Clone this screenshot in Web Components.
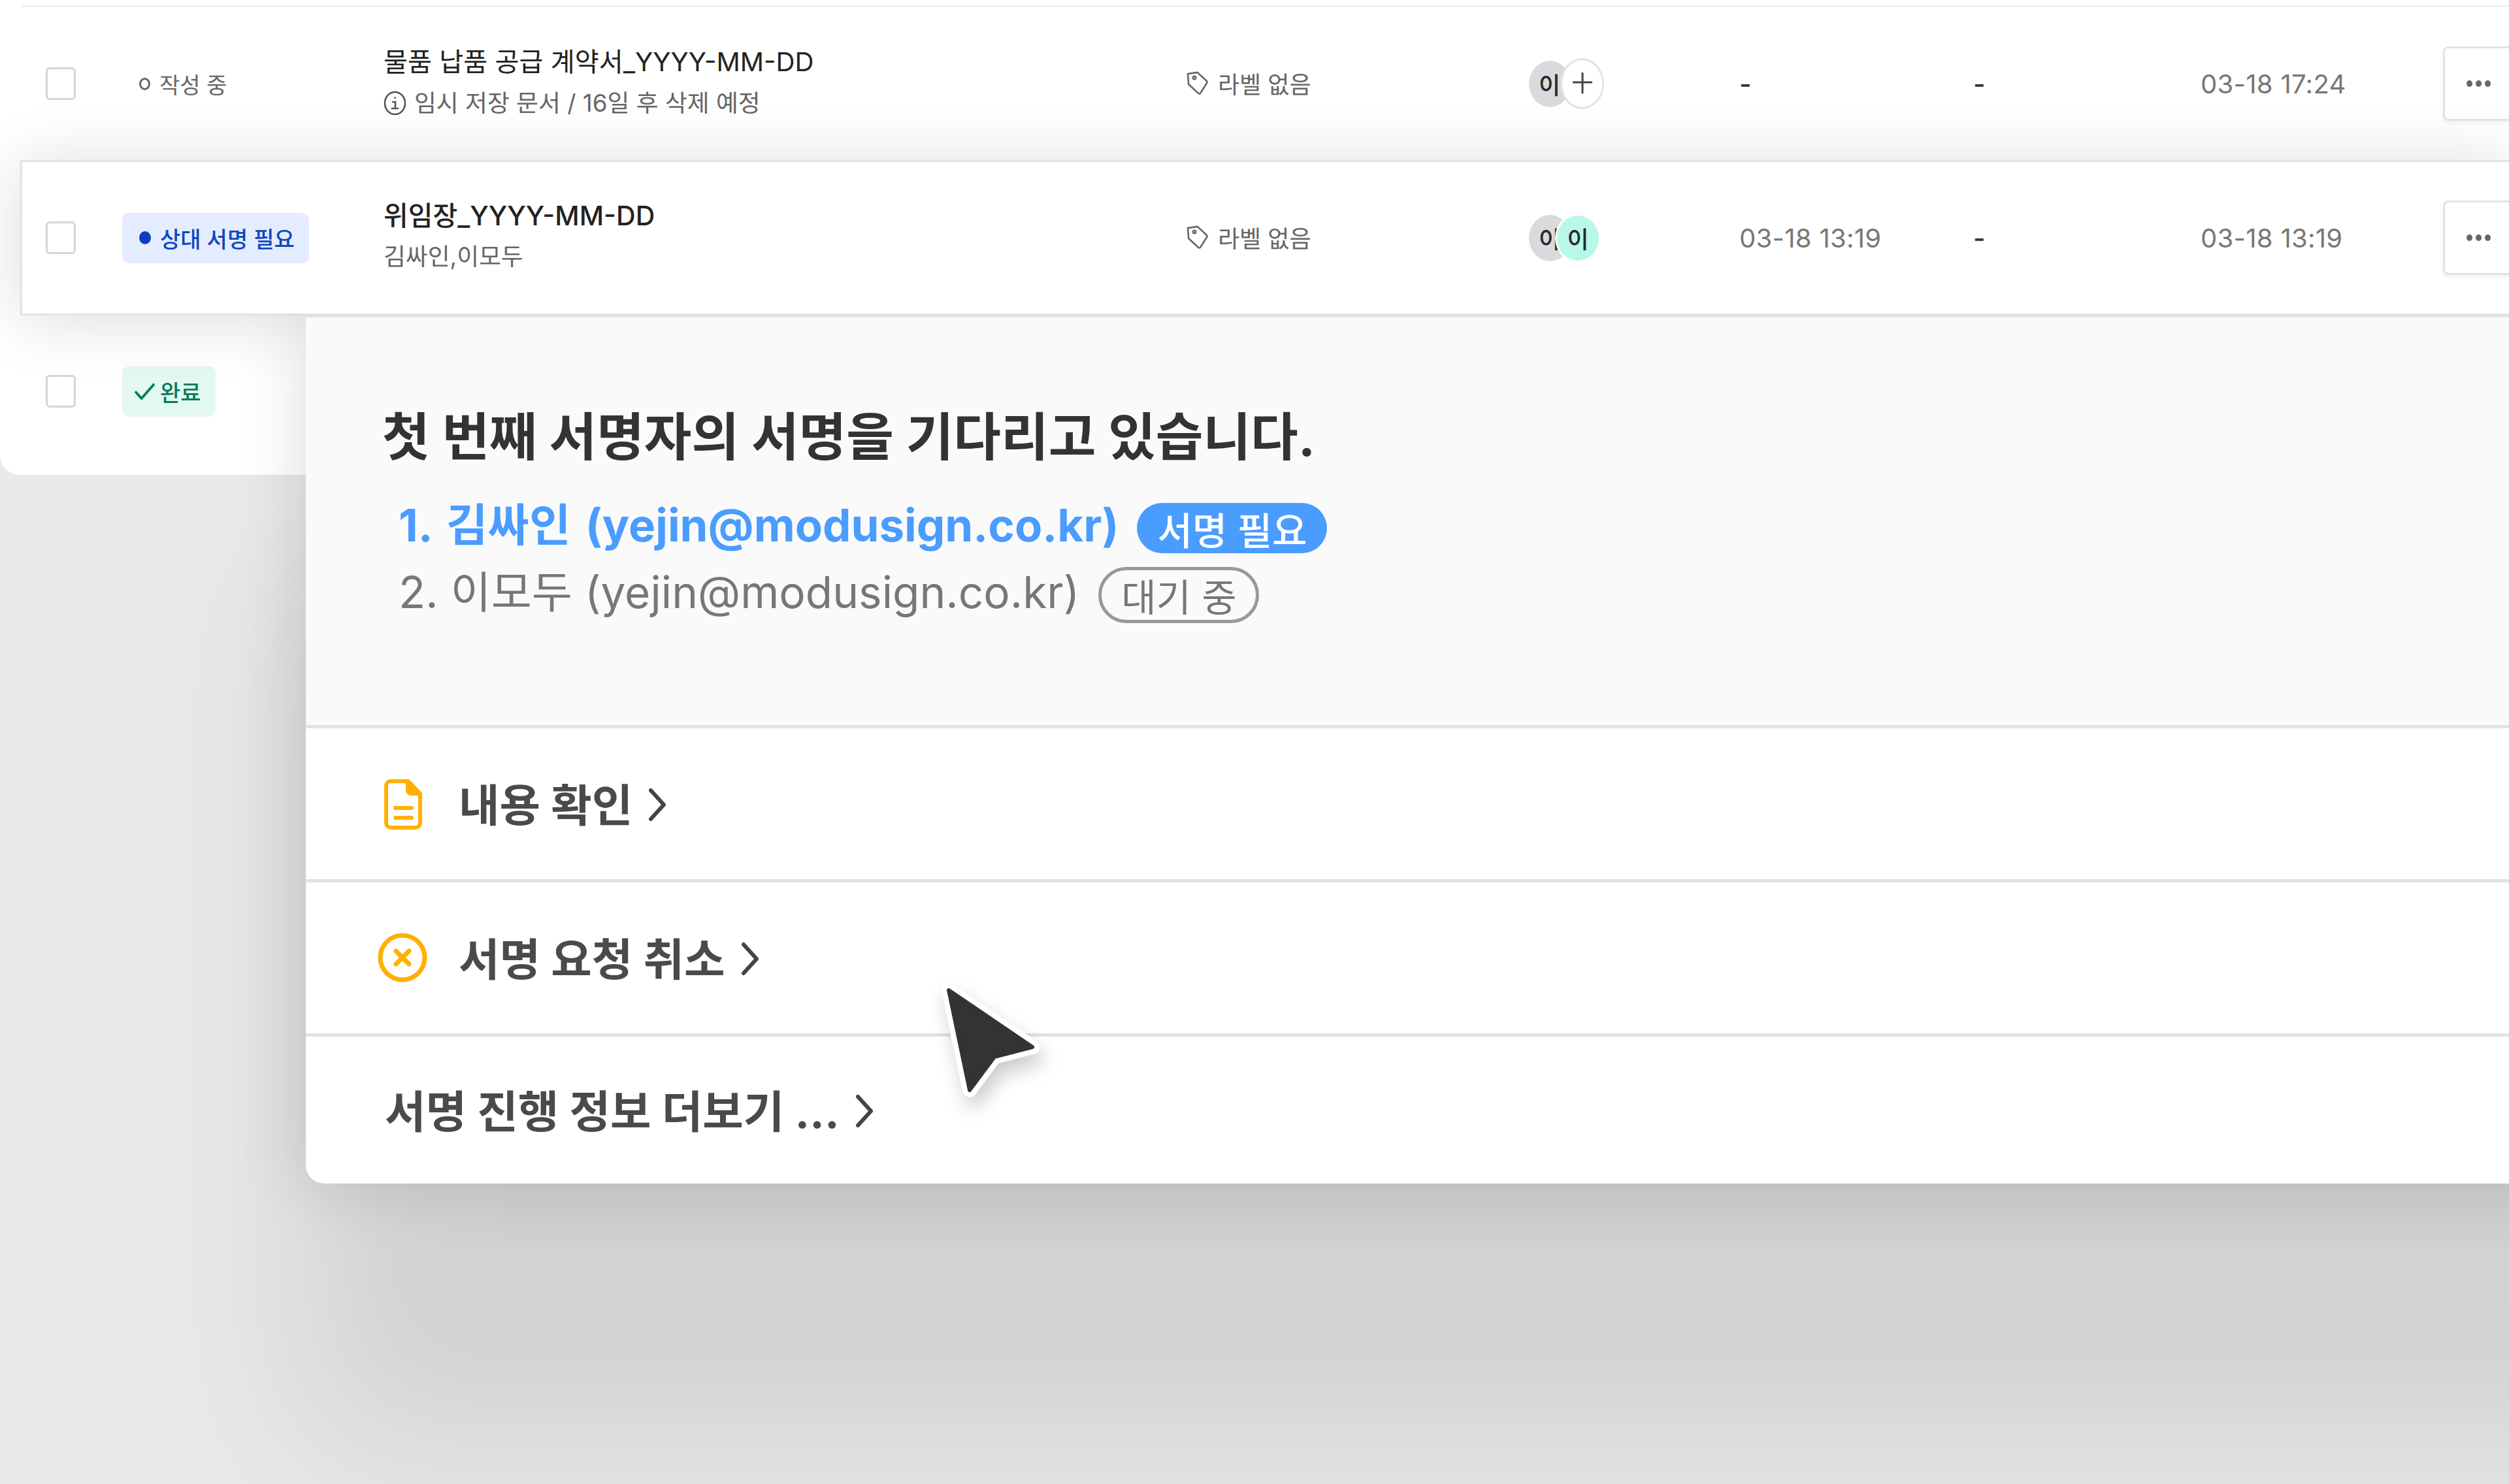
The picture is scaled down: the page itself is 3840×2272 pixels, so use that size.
<!DOCTYPE html>
<html lang="ko">
<head>
<meta charset="utf-8">
<title>문서 목록</title>
<style>
  html, body { margin: 0; padding: 0; }
  body {
    width: 3840px;
    height: 2272px;
    overflow: hidden;
    background: #e9e9e9;
    font-family: "Inter", "Noto Sans CJK KR", sans-serif;
  }
</style>
</head>
<body>
<doc-stage>
  <doc-table>
    <doc-row>
      <status-chip kind="draft" slot="status">작성 중</status-chip>
      <span slot="title">물품 납품 공급 계약서_YYYY-MM-DD</span>
      <temp-note slot="sub">임시 저장 문서 / 16일 후 삭제 예정</temp-note>
      <user-avatars slot="people" first="이" add></user-avatars>
      <span slot="sent" class="none">-</span>
      <span slot="done" class="none">-</span>
      <span slot="updated">03-18 17:24</span>
    </doc-row>
    <doc-row selected>
      <status-chip kind="waiting" slot="status">상대 서명 필요</status-chip>
      <span slot="title">위임장_YYYY-MM-DD</span>
      <span slot="sub">김싸인,이모두</span>
      <user-avatars slot="people" first="이" second="이"></user-avatars>
      <span slot="sent">03-18 13:19</span>
      <span slot="done" class="none">-</span>
      <span slot="updated">03-18 13:19</span>
    </doc-row>
    <doc-row last>
      <status-chip kind="done" slot="status">완료</status-chip>
    </doc-row>
  </doc-table>

  <sign-panel>
    <span slot="heading">첫 번째 서명자의 서명을 기다리고 있습니다.</span>
    <signer-line slot="signers" state="active" badge="서명 필요">1. 김싸인 (yejin@modusign.co.kr)</signer-line>
    <signer-line slot="signers" state="pending" badge="대기 중">2. 이모두 (yejin@modusign.co.kr)</signer-line>
    <panel-link slot="links" icon="doc">내용 확인</panel-link>
    <panel-link slot="links" icon="cancel">서명 요청 취소</panel-link>
    <panel-link slot="links" last>서명 진행 정보 더보기 ...</panel-link>
  </sign-panel>

  <mouse-pointer></mouse-pointer>
</doc-stage>

<script>
class DocStage extends HTMLElement {
  constructor() {
    super();
    this.attachShadow({ mode: "open" });
    this.shadowRoot.innerHTML = `
      <style>
        :host { display: block; position: relative; width: 3840px; height: 2272px; overflow: hidden; }
      </style>
      <slot></slot>
    `;
  }
}

class DocTable extends HTMLElement {
  constructor() {
    super();
    this.attachShadow({ mode: "open" });
    this.shadowRoot.innerHTML = `
      <style>
        :host {
          display: block;
          box-sizing: border-box;
          height: 727px;
          padding-top: 8px;
          background: #fff;
          border-bottom-left-radius: 30px;
          overflow: hidden;
        }
        .top { height: 3px; margin-left: 33px; background: #efefef; }
      </style>
      <div class="top"></div>
      <slot></slot>
    `;
  }
}

class DocRow extends HTMLElement {
  constructor() {
    super();
    this.attachShadow({ mode: "open" });
    this.shadowRoot.innerHTML = `
      <style>
        :host {
          display: grid;
          box-sizing: border-box;
          height: 234px;
          padding-left: 70px;
          grid-template-columns: 117px 400px 1229px 524px 322px 358px 348px 371px 101px;
          align-items: center;
          position: relative;
          font-size: 34px;
          color: #666;
        }
        :host([selected]) {
          height: 238px;
          margin-left: 31px;
          padding-left: 36px;
          background: #fff;
          border: solid #e3e3e3;
          border-width: 3px 0 3px 3px;
          box-shadow: 0 6px 100px rgba(0, 0, 0, 0.14);
          z-index: 1;
        }
        :host([last]) { height: 238px; padding-bottom: 6px; }
        .box {
          width: 46px;
          height: 50px;
          box-sizing: border-box;
          border: 3px solid #d6d6d6;
          border-radius: 6px;
          background: #fff;
        }
        .doc { display: flex; flex-direction: column; gap: 18px; min-width: 0; margin-top: -4px; }
        .title { font-size: 40.2px; line-height: 46px; color: #222; }
        :host([selected]) .title { font-size: 41px; font-weight: 500; margin-top: -2px; }
        .sub { font-size: 36.8px; line-height: 44px; color: #666; }
        .label { display: flex; align-items: center; gap: 14px; font-size: 36px; margin-top: -2px; }
        .label svg { width: 34px; height: 38px; }
        .dash { color: #777; font-size: 40px; letter-spacing: 0.3px; }
        ::slotted(.none) { color: #333; font-weight: 500; }
        .more {
          justify-self: end;
          width: 101px;
          height: 114px;
          box-sizing: border-box;
          border: 3px solid #e3e3e3;
          border-right: 0;
          border-radius: 8px 0 0 8px;
          background: #fff;
          box-shadow: 0 3px 6px rgba(0, 0, 0, 0.06);
          display: flex;
          align-items: center;
          gap: 5px;
          padding-left: 33px;
        }
        .more i { width: 9px; height: 10px; border-radius: 50%; background: #666; }
      </style>
      <div class="box"></div>
      <slot name="status"></slot>
      <div class="doc">
        <div class="title"><slot name="title"></slot></div>
        <div class="sub"><slot name="sub"></slot></div>
      </div>
      <div class="label" id="label">
        <svg viewBox="0 0 34 38" fill="none" stroke="#666" stroke-width="2.6" stroke-linejoin="round">
          <path d="M4 3h15l12 15a2 2 0 0 1 0 3L19 35a2 2 0 0 1-3 0L3 19z" transform="rotate(-8 17 19)"/>
          <circle cx="12" cy="11" r="2.2"/>
        </svg>
        <span>라벨 없음</span>
      </div>
      <slot name="people"></slot>
      <div class="dash"><slot name="sent"></slot></div>
      <div class="dash"><slot name="done"></slot></div>
      <div class="dash"><slot name="updated"></slot></div>
      <div class="more" id="more"><i></i><i></i><i></i></div>
    `;
  }

  connectedCallback() {
    // The half-hidden row has nothing but its checkbox and status
    if (this.hasAttribute("last")) {
      this.shadowRoot.querySelector(".doc").style.visibility = "hidden";
      this.shadowRoot.getElementById("label").style.visibility = "hidden";
      this.shadowRoot.getElementById("more").style.visibility = "hidden";
    }
  }
}

class StatusChip extends HTMLElement {
  constructor() {
    super();
    this.attachShadow({ mode: "open" });
  }

  connectedCallback() {
    const kind = this.getAttribute("kind");
    const marks = {
      draft: `<i class="ring"></i>`,
      waiting: `<i class="dot"></i>`,
      done: `<svg viewBox="0 0 34 28" fill="none" stroke="#087a5c" stroke-width="4" stroke-linecap="round" stroke-linejoin="round"><path d="M3 15l9 10L31 3"/></svg>`
    };
    this.shadowRoot.innerHTML = `
      <style>
        :host {
          display: inline-flex;
          justify-self: start;
          align-items: center;
          box-sizing: border-box;
          height: 77px;
          padding: 0 22px 0 26px;
          gap: 14px;
          border-radius: 10px;
          font-size: 34px;
          white-space: nowrap;
        }
        :host([kind="draft"]) { color: #666; }
        :host([kind="waiting"]) { background: #e4edff; color: #0d47c2; font-weight: 500; }
        :host([kind="done"]) { background: #e3f8f1; color: #087a5c; font-weight: 500; padding: 0 22px 0 18px; gap: 7px; }
        .ring { width: 17px; height: 19px; box-sizing: border-box; border: 3px solid #666; border-radius: 50%; }
        .dot { width: 18px; height: 20px; border-radius: 50%; background: #0b3fc0; }
        svg { width: 33px; height: 27px; }
      </style>
      ${marks[kind]}
      <slot></slot>
    `;
  }
}

class TempNote extends HTMLElement {
  constructor() {
    super();
    this.attachShadow({ mode: "open" });
    this.shadowRoot.innerHTML = `
      <style>
        :host { display: flex; align-items: center; gap: 12px; }
        svg { width: 35px; height: 38px; flex: none; }
      </style>
      <svg viewBox="0 0 35 38" fill="none" stroke="#555" stroke-width="2.6">
        <ellipse cx="17.5" cy="19" rx="15.5" ry="17"/>
        <path d="M14 17h4v10M13 27h9" stroke-linecap="round"/>
        <circle cx="17.5" cy="11" r="1.4" fill="#555" stroke="none"/>
      </svg>
      <slot></slot>
    `;
  }
}

class UserAvatars extends HTMLElement {
  constructor() {
    super();
    this.attachShadow({ mode: "open" });
  }

  connectedCallback() {
    const second = this.hasAttribute("add")
      ? `<div class="face add"><svg viewBox="0 0 30 34" fill="none" stroke="#444" stroke-width="3" stroke-linecap="round"><path d="M1 15h28M15 1v30"/></svg></div>`
      : `<div class="face mint">${this.getAttribute("second")}</div>`;
    this.shadowRoot.innerHTML = `
      <style>
        :host { display: flex; align-items: center; font-size: 36px; font-weight: 500; color: #2a2a2a; }
        .face {
          display: flex;
          align-items: center;
          justify-content: center;
          box-sizing: border-box;
          width: 64px;
          height: 71px;
          border-radius: 50%;
          flex: none;
        }
        .grey { background: #d9dade; justify-content: flex-start; padding-left: 15px; }
        .mint {
          width: 70px;
          height: 75px;
          margin-left: -24px;
          background: #b8f8e8;
          border: 3px solid #fff;
          position: relative;
        }
        .add {
          width: 67px;
          height: 78px;
          margin-left: -16px;
          background: #fff;
          border: 3px solid #e3e3e3;
          position: relative;
        }
        .add svg { width: 30px; height: 34px; }
      </style>
      <div class="face grey">${this.getAttribute("first")}</div>
      ${second}
    `;
  }
}

class SignPanel extends HTMLElement {
  constructor() {
    super();
    this.attachShadow({ mode: "open" });
    this.shadowRoot.innerHTML = `
      <style>
        :host {
          display: flex;
          flex-direction: column;
          position: absolute;
          left: 468px;
          right: -900px;
          top: 481px;
          box-sizing: border-box;
          height: 1331px;
          background: #fff;
          border-top: 5px solid #e2e2e2;
          border-bottom-left-radius: 28px;
          box-shadow: 0 400px 460px rgba(0, 0, 0, 0.1), 0 0 110px rgba(0, 0, 0, 0.14);
          clip-path: inset(0 -1000px -1000px -1000px);
          z-index: 2;
        }
        .top {
          box-sizing: border-box;
          height: 631px;
          padding: 128px 0 0 117px;
          background: #fafafa;
          border-bottom: 5px solid #e2e2e2;
        }
        .heading {
          font-size: 79px;
          line-height: 110px;
          font-weight: 700;
          color: #333;
          white-space: nowrap;
        }
        .signers { display: flex; flex-direction: column; margin: 23px 0 0 25px; }
      </style>
      <div class="top">
        <div class="heading"><slot name="heading"></slot></div>
        <div class="signers"><slot name="signers"></slot></div>
      </div>
      <slot name="links"></slot>
    `;
  }
}

class SignerLine extends HTMLElement {
  constructor() {
    super();
    this.attachShadow({ mode: "open" });
    this.shadowRoot.innerHTML = `
      <style>
        :host {
          display: flex;
          align-items: center;
          height: 103px;
          gap: 32px;
          white-space: nowrap;
        }
        :host([state="active"]) { color: #4a9cff; font-weight: 700; font-size: 69px; word-spacing: 6px; }
        :host([state="pending"]) { color: #777; font-size: 67.5px; }
        .badge {
          box-sizing: border-box;
          display: flex;
          align-items: center;
          justify-content: center;
          border-radius: 44px;
          font-size: 58px;
          word-spacing: 0;
        }
        :host([state="active"]) .badge { width: 291px; height: 77px; background: #4a9cff; color: #fff; font-weight: 500; margin-top: 20px; margin-left: -4px; }
        :host([state="pending"]) .badge { width: 246px; height: 86px; border: 5px solid #999; color: #777; margin-top: 18px; margin-left: -3px; }
      </style>
      <slot></slot>
      <div class="badge"></div>
    `;
  }

  connectedCallback() {
    this.shadowRoot.querySelector(".badge").textContent = this.getAttribute("badge");
  }
}

class PanelLink extends HTMLElement {
  constructor() {
    super();
    this.attachShadow({ mode: "open" });
  }

  connectedCallback() {
    const icons = {
      doc: `<svg class="doc" viewBox="0 0 58 77" fill="none" stroke="#ffb000" stroke-width="6" stroke-linejoin="round">
              <path d="M9 3h28l18 19v45a7 7 0 0 1-7 7H10a7 7 0 0 1-7-7V10a7 7 0 0 1 6-7z"/>
              <path d="M36 3v14a5 5 0 0 0 5 5h14z" fill="#ffb000"/>
              <path d="M17 44h25M17 59h25" stroke-linecap="round"/>
            </svg>`,
      cancel: `<svg class="cancel" viewBox="0 0 76 76" fill="none" stroke="#ffb000" stroke-width="7" stroke-linecap="round">
              <circle cx="38" cy="38" r="34"/>
              <path d="M28 28l20 20M48 28L28 48"/>
            </svg>`
    };
    const icon = this.getAttribute("icon");
    this.shadowRoot.innerHTML = `
      <style>
        :host {
          display: flex;
          align-items: center;
          box-sizing: border-box;
          height: 237px;
          padding-left: 110px;
          border-bottom: 5px solid #e2e2e2;
          font-size: 68px;
          font-weight: 700;
          color: #4a4a4a;
          white-space: nowrap;
        }
        :host([last]) { border-bottom: 0; padding-left: 121px; height: 226px; }
        .icon { width: 124px; flex: none; display: flex; align-items: center; }
        .doc { width: 58px; height: 77px; margin-left: 10px; margin-top: 3px; }
        .cancel { width: 76px; height: 76px; margin-top: 3px; margin-top: 0; }
        .chev { width: 28px; height: 52px; margin-left: 24px; margin-top: 3px; }
        slot { display: block; margin-top: -3px; }
      </style>
      ${icon ? `<div class="icon">${icons[icon]}</div>` : ""}
      <slot></slot>
      <svg class="chev" viewBox="0 0 28 52" fill="none" stroke="#444" stroke-width="6" stroke-linecap="round" stroke-linejoin="round">
        <path d="M4 4l20 22L4 48"/>
      </svg>
    `;
  }
}

class MousePointer extends HTMLElement {
  constructor() {
    super();
    this.attachShadow({ mode: "open" });
    this.shadowRoot.innerHTML = `
      <style>
        :host {
          position: absolute;
          left: 1420px;
          top: 1490px;
          width: 200px;
          height: 210px;
          z-index: 3;
          filter: drop-shadow(6px 16px 14px rgba(0, 0, 0, 0.2));
        }
        svg { width: 100%; height: 100%; overflow: visible; }
      </style>
      <svg viewBox="0 0 200 210" stroke-linejoin="round">
        <path d="M32 26L160 113L102 128L64 179z" fill="#fff" stroke="#fff" stroke-width="22"/>
        <path d="M32 26L160 113L102 128L64 179z" fill="#333" stroke="#333" stroke-width="6"/>
      </svg>
    `;
  }
}

customElements.define("doc-stage", DocStage);
customElements.define("doc-table", DocTable);
customElements.define("doc-row", DocRow);
customElements.define("status-chip", StatusChip);
customElements.define("temp-note", TempNote);
customElements.define("user-avatars", UserAvatars);
customElements.define("sign-panel", SignPanel);
customElements.define("signer-line", SignerLine);
customElements.define("panel-link", PanelLink);
customElements.define("mouse-pointer", MousePointer);
</script>
</body>
</html>
